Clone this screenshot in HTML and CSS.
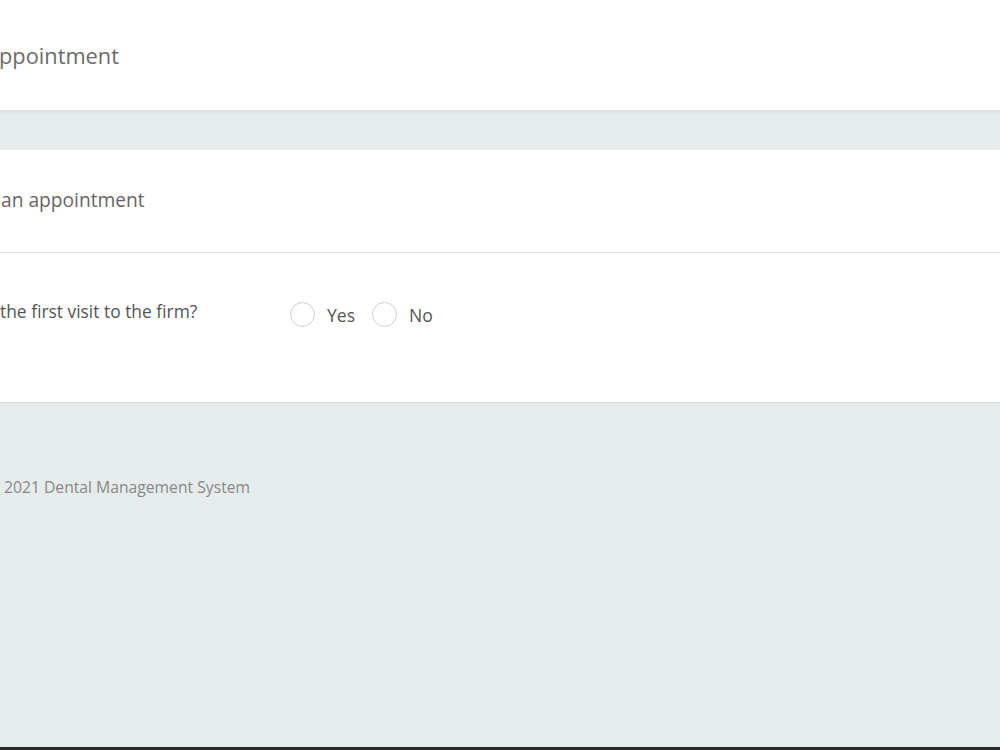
FILE: index.html
```html
<html>
<head>
  <meta charset="utf-8" />
  <link rel="stylesheet" href="styles.css">
</head>
<body>
  <div id="page">
    <div class="topbar">
      <h1 class="title">ppointment</h1>
    </div>
    <div class="content">
      <div class="card">
        <div class="card-head">
          <h2 class="card-title">an appointment</h2>
        </div>
        <div class="card-body">
          <div class="field">
            <label class="question">the first visit to the firm?</label>
            <div class="choices">
              <label class="choice"><span class="radio"></span>Yes</label>
              <label class="choice"><span class="radio"></span>No</label>
            </div>
          </div>
        </div>
      </div>
      <div class="footer">
        <span class="copy">2021 Dental Management System</span>
      </div>
    </div>
  </div>
</body>
</html>
```

FILE: styles.css
```css
html, body {
  margin: 0;
  padding: 0;
  height: 100%;
}

body {
  font-family: "Open Sans", "Noto Sans", sans-serif;
  background-color: #e5eceb;
  color: #666;
  overflow: hidden;
}

#page {
  height: 747px;
  border-bottom: 3px solid #2a2a2a;
  display: flex;
  flex-direction: column;
}

.topbar {
  background-color: #fff;
  height: 110px;
  border-bottom: 1px solid #d9dede;
  box-shadow: 0 1px 3px rgba(0, 0, 0, 0.06);
  display: flex;
  align-items: center;
}

.title {
  margin: 0 0 0 -1px;
  font-size: 21.8px;
  font-weight: normal;
  color: #6a6a6a;
}

.content {
  padding-top: 39px;
  flex: 1;
}

.card {
  background-color: #fff;
  border-bottom: 1px solid #d9dede;
}

.card-head {
  height: 103px;
  border-bottom: 1px solid #e6e6e6;
  display: flex;
  align-items: center;
  padding-bottom: 3px;
  box-sizing: border-box;
}

.card-title {
  margin: 0 0 0 1px;
  font-size: 19.2px;
  font-weight: normal;
  color: #666;
}

.card-body {
  height: 149px;
}

.field {
  display: flex;
  align-items: center;
  padding-top: 41px;
}

.question {
  width: 290px;
  font-size: 17.4px;
  color: #555;
}

.choices {
  display: flex;
  gap: 17px;
  padding-top: 8px;
}

.choice {
  display: flex;
  align-items: center;
  gap: 12px;
  font-size: 17.6px;
  color: #555;
}

.radio {
  width: 23px;
  height: 23px;
  border: 1px solid #cfcfcf;
  border-radius: 50%;
  background-color: #fff;
}

.footer {
  padding-top: 73px;
}

.copy {
  display: inline-block;
  margin-left: 4px;
  font-size: 15.7px;
  color: #888;
}
```
